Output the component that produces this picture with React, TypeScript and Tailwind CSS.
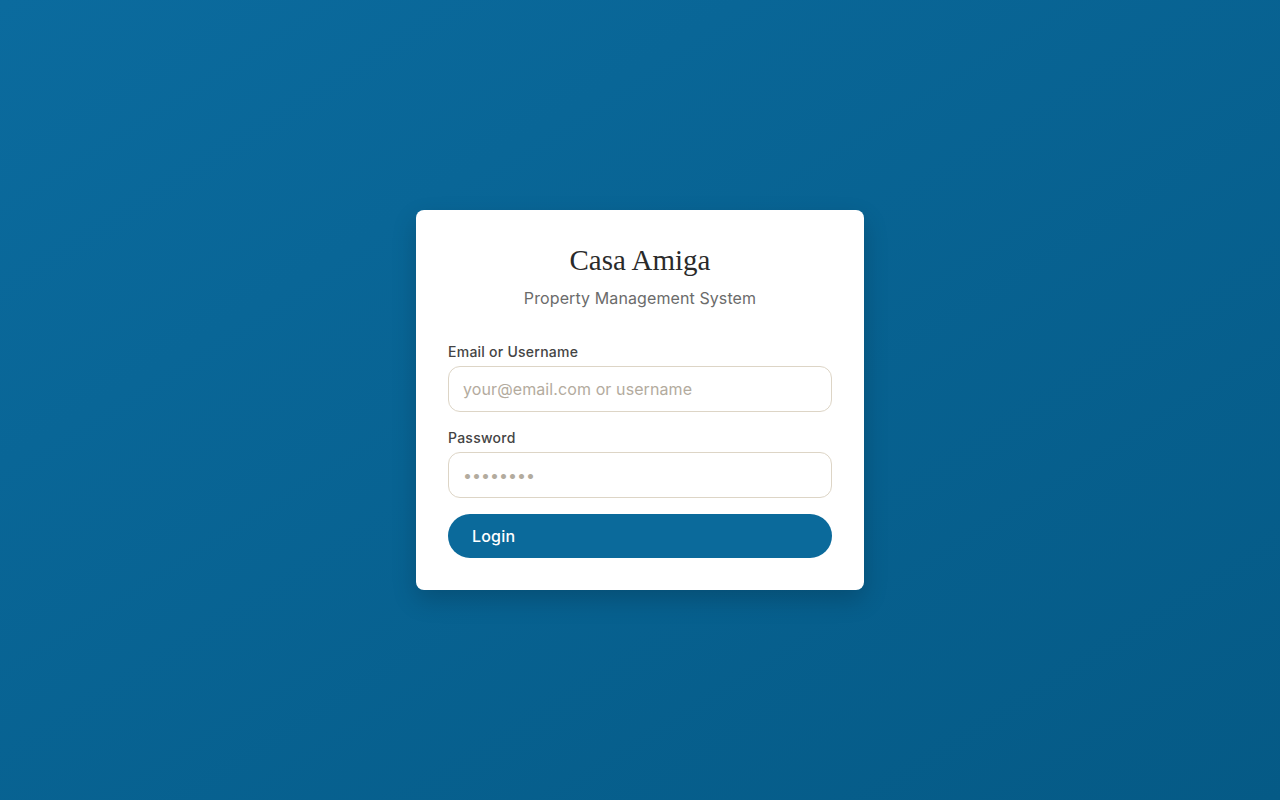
export default function App() {
  return (
    <div className="min-h-screen w-full bg-gradient-to-br from-[#0b6b9e] to-[#055a86] flex items-center justify-center font-['Inter','Noto_Sans',sans-serif]">
      <div className="w-[448px] bg-white rounded-lg p-8 shadow-[0_10px_25px_rgba(0,0,0,0.18)]">
        {/* Header */}
        <h1 className="text-center text-[29px] leading-9 text-[#2a2a2a] font-['Liberation_Serif',serif]">
          Casa Amiga
        </h1>
        <p className="mt-2 text-center text-base leading-6 tracking-[0.1px] text-[#6b6b6b]">
          Property Management System
        </p>

        <form className="mt-8 flex flex-col" onSubmit={(e) => e.preventDefault()}>
          <label className="text-sm leading-5 font-medium tracking-[0.25px] text-[#444]">Email or Username</label>
          <input
            type="text"
            placeholder="your@email.com or username"
            className="mt-1 w-full rounded-xl border border-[#ddd5c6] bg-white px-[14px] py-[10px] text-base leading-6 tracking-[0.1px] text-[#333] placeholder:text-[#b3ab9e] outline-none"
          />

          <label className="mt-4 text-sm leading-5 font-medium tracking-[0.25px] text-[#444]">Password</label>
          <input
            type="password"
            placeholder="••••••••"
            className="mt-1 w-full rounded-xl border border-[#ddd5c6] bg-white px-[14px] py-[10px] text-base leading-6 text-[#333] placeholder:text-[#b3ab9e] outline-none"
          />

          <button
            type="submit"
            className="mt-4 h-11 w-full rounded-full bg-[#0b6a9b] px-6 text-left text-base font-medium tracking-[0.2px] text-white"
          >
            Login
          </button>
        </form>
      </div>
    </div>
  );
}
